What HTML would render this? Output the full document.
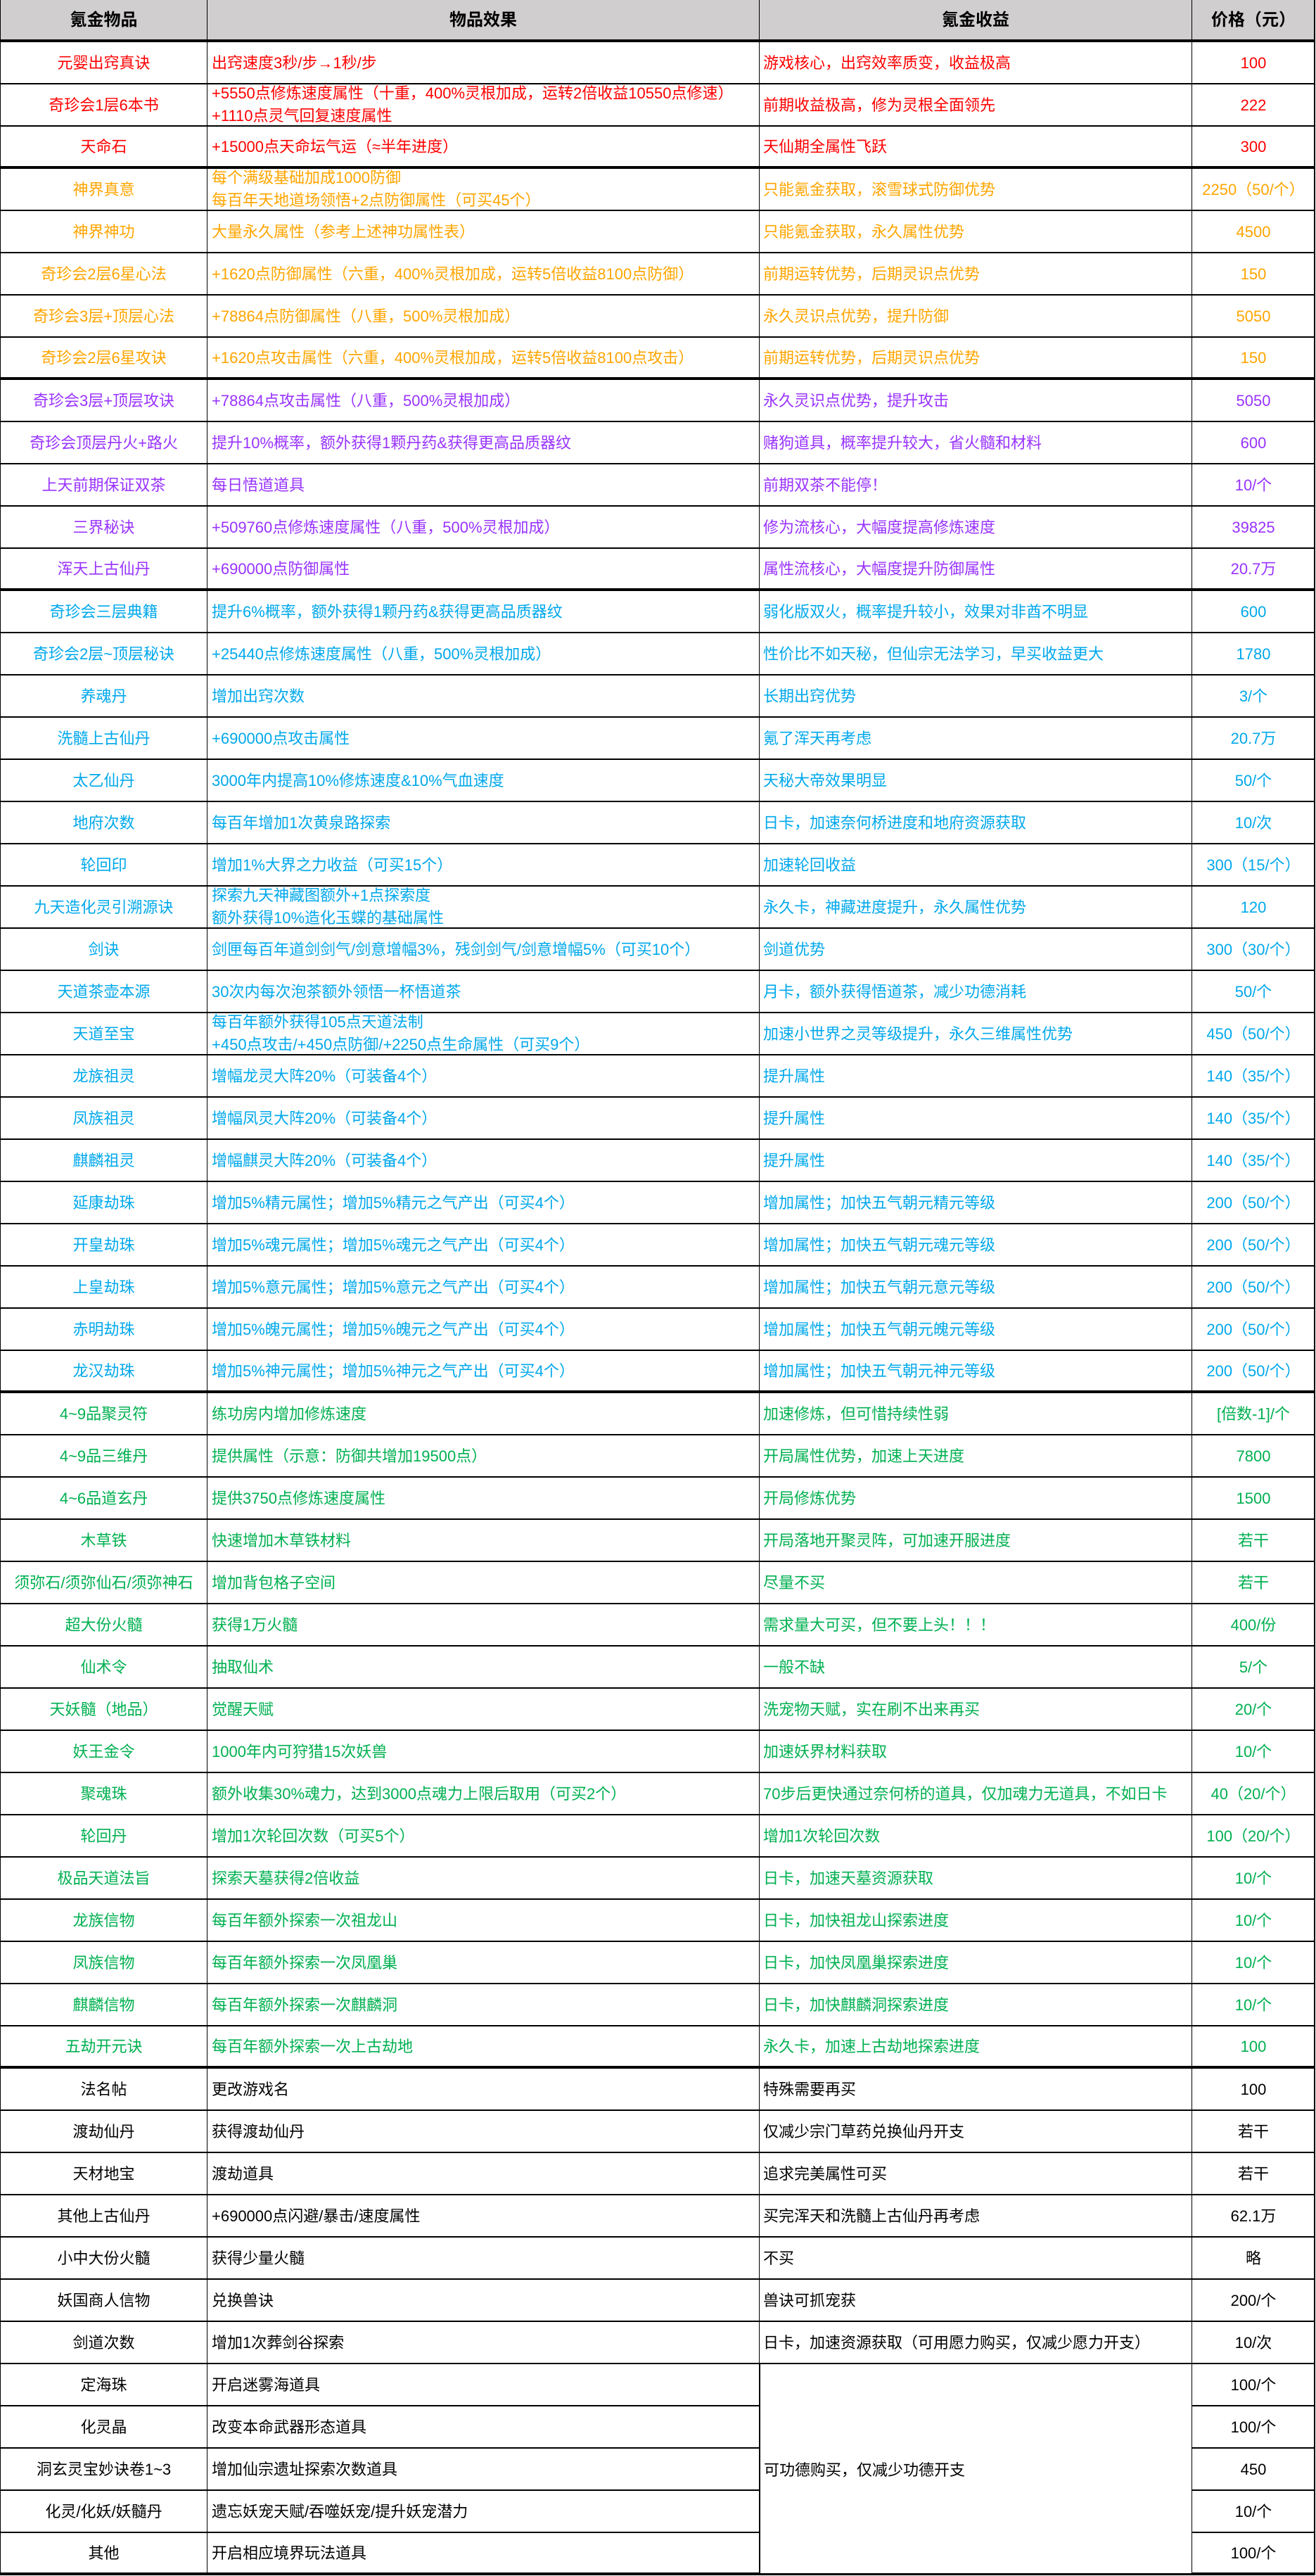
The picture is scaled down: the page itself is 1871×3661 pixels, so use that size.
<!DOCTYPE html>
<html><head><meta charset="utf-8">
<style>
*{margin:0;padding:0;box-sizing:border-box}
body{width:1871px;height:3661px;background:#fff;font-family:"Liberation Sans","Noto Sans CJK SC",sans-serif;font-size:22px;position:relative;overflow:hidden}
#t{position:absolute;left:0;top:0;width:1870px;border-left:1px solid #000;border-right:2px solid #000}
.r{display:grid;grid-template-columns:294px 785px 615px 174px;height:60px;border-bottom:2px solid #000;align-items:stretch}
.r.k{border-bottom:4px solid #000}
.r>div{border-right:1px solid #000;display:flex;align-items:center;padding-left:6px;line-height:31px;white-space:nowrap;overflow:hidden}
.r>div:nth-child(1){justify-content:center;padding-left:0}
.r>div:nth-child(3){padding-left:5px}
.r>div:nth-child(4){justify-content:center;padding-left:0;border-right:none}
.h{background:#d0cecf;font-weight:bold;font-size:24px;color:#000}
.h>div{justify-content:center!important;padding-left:0!important}
.red{color:#ff0000}.or{color:#ffa500}.pu{color:#9933ff}.bl{color:#00a8ec}.gr{color:#00b050}.bk{color:#000}
.r>div.ml{flex-direction:column;align-items:flex-start;justify-content:center;line-height:32px}
#m{position:absolute;left:1080px;top:3360px;width:615px;height:297px;background:#fff;border-left:1px solid #000;border-right:1px solid #000;display:flex;align-items:center;padding-left:5px;font-size:22px;color:#000}
</style></head><body>
<div id="t">
<div class="r h k"><div>氪金物品</div><div>物品效果</div><div>氪金收益</div><div>价格（元）</div></div>
<div class="r red"><div>元婴出窍真诀</div><div>出窍速度3秒/步→1秒/步</div><div>游戏核心，出窍效率质变，收益极高</div><div>100</div></div>
<div class="r red"><div>奇珍会1层6本书</div><div class="ml"><span>+5550点修炼速度属性（十重，400%灵根加成，运转2倍收益10550点修速）</span><span>+1110点灵气回复速度属性</span></div><div>前期收益极高，修为灵根全面领先</div><div>222</div></div>
<div class="r red k"><div>天命石</div><div>+15000点天命坛气运（≈半年进度）</div><div>天仙期全属性飞跃</div><div>300</div></div>
<div class="r or"><div>神界真意</div><div class="ml"><span>每个满级基础加成1000防御</span><span>每百年天地道场领悟+2点防御属性（可买45个）</span></div><div>只能氪金获取，滚雪球式防御优势</div><div>2250（50/个）</div></div>
<div class="r or"><div>神界神功</div><div>大量永久属性（参考上述神功属性表）</div><div>只能氪金获取，永久属性优势</div><div>4500</div></div>
<div class="r or"><div>奇珍会2层6星心法</div><div>+1620点防御属性（六重，400%灵根加成，运转5倍收益8100点防御）</div><div>前期运转优势，后期灵识点优势</div><div>150</div></div>
<div class="r or"><div>奇珍会3层+顶层心法</div><div>+78864点防御属性（八重，500%灵根加成）</div><div>永久灵识点优势，提升防御</div><div>5050</div></div>
<div class="r or k"><div>奇珍会2层6星攻诀</div><div>+1620点攻击属性（六重，400%灵根加成，运转5倍收益8100点攻击）</div><div>前期运转优势，后期灵识点优势</div><div>150</div></div>
<div class="r pu"><div>奇珍会3层+顶层攻诀</div><div>+78864点攻击属性（八重，500%灵根加成）</div><div>永久灵识点优势，提升攻击</div><div>5050</div></div>
<div class="r pu"><div>奇珍会顶层丹火+路火</div><div>提升10%概率，额外获得1颗丹药&amp;获得更高品质器纹</div><div>赌狗道具，概率提升较大，省火髓和材料</div><div>600</div></div>
<div class="r pu"><div>上天前期保证双茶</div><div>每日悟道道具</div><div>前期双茶不能停！</div><div>10/个</div></div>
<div class="r pu"><div>三界秘诀</div><div>+509760点修炼速度属性（八重，500%灵根加成）</div><div>修为流核心，大幅度提高修炼速度</div><div>39825</div></div>
<div class="r pu k"><div>浑天上古仙丹</div><div>+690000点防御属性</div><div>属性流核心，大幅度提升防御属性</div><div>20.7万</div></div>
<div class="r bl"><div>奇珍会三层典籍</div><div>提升6%概率，额外获得1颗丹药&amp;获得更高品质器纹</div><div>弱化版双火，概率提升较小，效果对非酋不明显</div><div>600</div></div>
<div class="r bl"><div>奇珍会2层~顶层秘诀</div><div>+25440点修炼速度属性（八重，500%灵根加成）</div><div>性价比不如天秘，但仙宗无法学习，早买收益更大</div><div>1780</div></div>
<div class="r bl"><div>养魂丹</div><div>增加出窍次数</div><div>长期出窍优势</div><div>3/个</div></div>
<div class="r bl"><div>洗髓上古仙丹</div><div>+690000点攻击属性</div><div>氪了浑天再考虑</div><div>20.7万</div></div>
<div class="r bl"><div>太乙仙丹</div><div>3000年内提高10%修炼速度&amp;10%气血速度</div><div>天秘大帝效果明显</div><div>50/个</div></div>
<div class="r bl"><div>地府次数</div><div>每百年增加1次黄泉路探索</div><div>日卡，加速奈何桥进度和地府资源获取</div><div>10/次</div></div>
<div class="r bl"><div>轮回印</div><div>增加1%大界之力收益（可买15个）</div><div>加速轮回收益</div><div>300（15/个）</div></div>
<div class="r bl"><div>九天造化灵引溯源诀</div><div class="ml"><span>探索九天神藏图额外+1点探索度</span><span>额外获得10%造化玉蝶的基础属性</span></div><div>永久卡，神藏进度提升，永久属性优势</div><div>120</div></div>
<div class="r bl"><div>剑诀</div><div>剑匣每百年道剑剑气/剑意增幅3%，残剑剑气/剑意增幅5%（可买10个）</div><div>剑道优势</div><div>300（30/个）</div></div>
<div class="r bl"><div>天道茶壶本源</div><div>30次内每次泡茶额外领悟一杯悟道茶</div><div>月卡，额外获得悟道茶，减少功德消耗</div><div>50/个</div></div>
<div class="r bl"><div>天道至宝</div><div class="ml"><span>每百年额外获得105点天道法制</span><span>+450点攻击/+450点防御/+2250点生命属性（可买9个）</span></div><div>加速小世界之灵等级提升，永久三维属性优势</div><div>450（50/个）</div></div>
<div class="r bl"><div>龙族祖灵</div><div>增幅龙灵大阵20%（可装备4个）</div><div>提升属性</div><div>140（35/个）</div></div>
<div class="r bl"><div>凤族祖灵</div><div>增幅凤灵大阵20%（可装备4个）</div><div>提升属性</div><div>140（35/个）</div></div>
<div class="r bl"><div>麒麟祖灵</div><div>增幅麒灵大阵20%（可装备4个）</div><div>提升属性</div><div>140（35/个）</div></div>
<div class="r bl"><div>延康劫珠</div><div>增加5%精元属性；增加5%精元之气产出（可买4个）</div><div>增加属性；加快五气朝元精元等级</div><div>200（50/个）</div></div>
<div class="r bl"><div>开皇劫珠</div><div>增加5%魂元属性；增加5%魂元之气产出（可买4个）</div><div>增加属性；加快五气朝元魂元等级</div><div>200（50/个）</div></div>
<div class="r bl"><div>上皇劫珠</div><div>增加5%意元属性；增加5%意元之气产出（可买4个）</div><div>增加属性；加快五气朝元意元等级</div><div>200（50/个）</div></div>
<div class="r bl"><div>赤明劫珠</div><div>增加5%魄元属性；增加5%魄元之气产出（可买4个）</div><div>增加属性；加快五气朝元魄元等级</div><div>200（50/个）</div></div>
<div class="r bl k"><div>龙汉劫珠</div><div>增加5%神元属性；增加5%神元之气产出（可买4个）</div><div>增加属性；加快五气朝元神元等级</div><div>200（50/个）</div></div>
<div class="r gr"><div>4~9品聚灵符</div><div>练功房内增加修炼速度</div><div>加速修炼，但可惜持续性弱</div><div>[倍数-1]/个</div></div>
<div class="r gr"><div>4~9品三维丹</div><div>提供属性（示意：防御共增加19500点）</div><div>开局属性优势，加速上天进度</div><div>7800</div></div>
<div class="r gr"><div>4~6品道玄丹</div><div>提供3750点修炼速度属性</div><div>开局修炼优势</div><div>1500</div></div>
<div class="r gr"><div>木草铁</div><div>快速增加木草铁材料</div><div>开局落地开聚灵阵，可加速开服进度</div><div>若干</div></div>
<div class="r gr"><div>须弥石/须弥仙石/须弥神石</div><div>增加背包格子空间</div><div>尽量不买</div><div>若干</div></div>
<div class="r gr"><div>超大份火髓</div><div>获得1万火髓</div><div>需求量大可买，但不要上头！！！</div><div>400/份</div></div>
<div class="r gr"><div>仙术令</div><div>抽取仙术</div><div>一般不缺</div><div>5/个</div></div>
<div class="r gr"><div>天妖髓（地品）</div><div>觉醒天赋</div><div>洗宠物天赋，实在刷不出来再买</div><div>20/个</div></div>
<div class="r gr"><div>妖王金令</div><div>1000年内可狩猎15次妖兽</div><div>加速妖界材料获取</div><div>10/个</div></div>
<div class="r gr"><div>聚魂珠</div><div>额外收集30%魂力，达到3000点魂力上限后取用（可买2个）</div><div>70步后更快通过奈何桥的道具，仅加魂力无道具，不如日卡</div><div>40（20/个）</div></div>
<div class="r gr"><div>轮回丹</div><div>增加1次轮回次数（可买5个）</div><div>增加1次轮回次数</div><div>100（20/个）</div></div>
<div class="r gr"><div>极品天道法旨</div><div>探索天墓获得2倍收益</div><div>日卡，加速天墓资源获取</div><div>10/个</div></div>
<div class="r gr"><div>龙族信物</div><div>每百年额外探索一次祖龙山</div><div>日卡，加快祖龙山探索进度</div><div>10/个</div></div>
<div class="r gr"><div>凤族信物</div><div>每百年额外探索一次凤凰巢</div><div>日卡，加快凤凰巢探索进度</div><div>10/个</div></div>
<div class="r gr"><div>麒麟信物</div><div>每百年额外探索一次麒麟洞</div><div>日卡，加快麒麟洞探索进度</div><div>10/个</div></div>
<div class="r gr k"><div>五劫开元诀</div><div>每百年额外探索一次上古劫地</div><div>永久卡，加速上古劫地探索进度</div><div>100</div></div>
<div class="r bk"><div>法名帖</div><div>更改游戏名</div><div>特殊需要再买</div><div>100</div></div>
<div class="r bk"><div>渡劫仙丹</div><div>获得渡劫仙丹</div><div>仅减少宗门草药兑换仙丹开支</div><div>若干</div></div>
<div class="r bk"><div>天材地宝</div><div>渡劫道具</div><div>追求完美属性可买</div><div>若干</div></div>
<div class="r bk"><div>其他上古仙丹</div><div>+690000点闪避/暴击/速度属性</div><div>买完浑天和洗髓上古仙丹再考虑</div><div>62.1万</div></div>
<div class="r bk"><div>小中大份火髓</div><div>获得少量火髓</div><div>不买</div><div>略</div></div>
<div class="r bk"><div>妖国商人信物</div><div>兑换兽诀</div><div>兽诀可抓宠获</div><div>200/个</div></div>
<div class="r bk"><div>剑道次数</div><div>增加1次葬剑谷探索</div><div>日卡，加速资源获取（可用愿力购买，仅减少愿力开支）</div><div>10/次</div></div>
<div class="r bk"><div>定海珠</div><div>开启迷雾海道具</div><div></div><div>100/个</div></div>
<div class="r bk"><div>化灵晶</div><div>改变本命武器形态道具</div><div></div><div>100/个</div></div>
<div class="r bk"><div>洞玄灵宝妙诀卷1~3</div><div>增加仙宗遗址探索次数道具</div><div></div><div>450</div></div>
<div class="r bk"><div>化灵/化妖/妖髓丹</div><div>遗忘妖宠天赋/吞噬妖宠/提升妖宠潜力</div><div></div><div>10/个</div></div>
<div class="r bk k"><div>其他</div><div>开启相应境界玩法道具</div><div></div><div>100/个</div></div>
</div>
<div id="m">可功德购买，仅减少功德开支</div>
</body></html>
